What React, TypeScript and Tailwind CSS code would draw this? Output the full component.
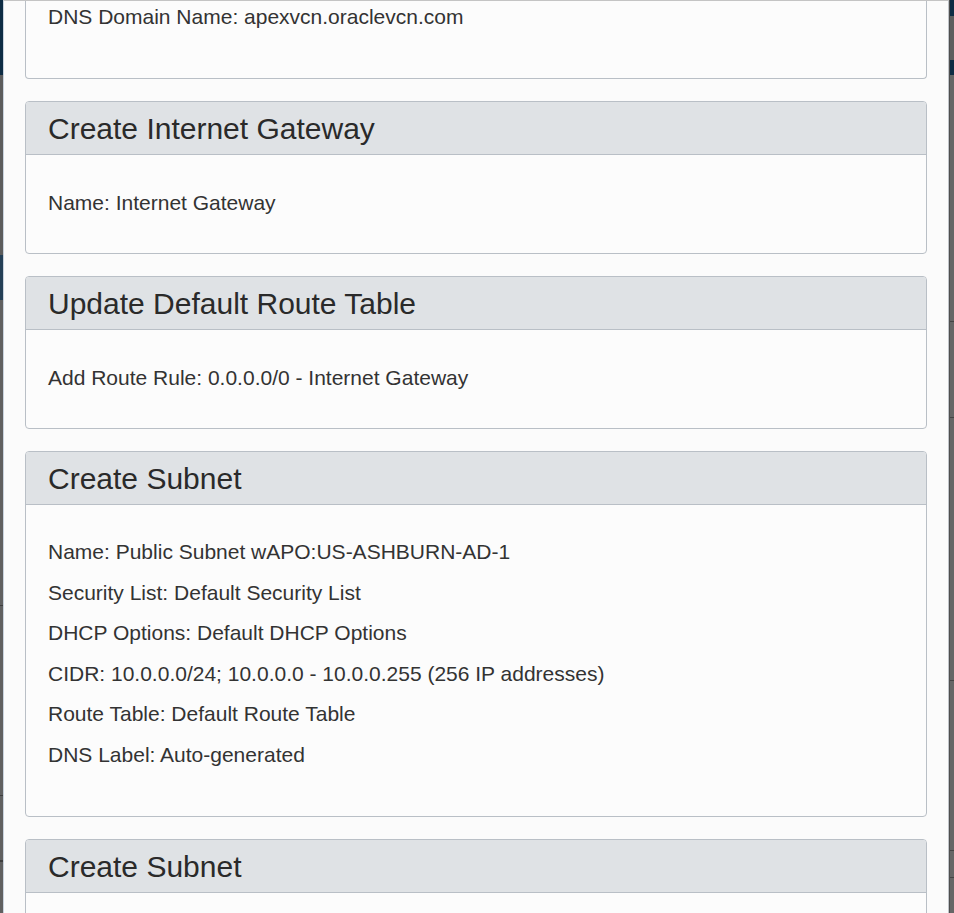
import React from "react";

const font = { fontFamily: '"Liberation Sans", Arial, sans-serif' };

function Panel({
  title,
  lines,
  multi = false,
}: {
  title: string;
  lines: string[];
  multi?: boolean;
}) {
  return (
    <div className="shrink-0 rounded-[4px] border border-[#b9bfc6] bg-[#fcfcfc] overflow-hidden">
      <div className="h-[53px] pt-[2px] flex items-center px-[22px] bg-[#dfe2e5] border-b border-[#b9bfc6]">
        <span className="text-[30px] leading-[34px] text-[#2a2a2a]">{title}</span>
      </div>
      <div
        className={
          "px-[22px] flex flex-col gap-[16.5px] " +
          (multi ? "pt-[35px] pb-[49.5px]" : "pt-[36px] pb-[38px]")
        }
      >
        {lines.map((l) => (
          <div key={l} className="text-[21px] leading-[24px] text-[#333333] whitespace-nowrap">
            {l}
          </div>
        ))}
      </div>
    </div>
  );
}

export default function App() {
  return (
    <div className="w-[954px] h-[913px] overflow-hidden flex bg-[#656565]" style={font}>
      {/* backdrop left strip */}
      <div className="w-[3px] shrink-0 flex flex-col">
        <div className="h-[75px] bg-[#0e2c44]" />
        <div className="h-[180px] bg-[#5c5c5c]" />
        <div className="h-[45px] bg-[#243f56]" />
        <div className="h-[305px] bg-[#606060]" />
        <div className="h-[1px] bg-[#3e3e3e]" />
        <div className="h-[189px] bg-[#606060]" />
        <div className="h-[1px] bg-[#3e3e3e]" />
        <div className="h-[64px] bg-[#606060]" />
        <div className="h-[2px] bg-[#3e3e3e]" />
        <div className="flex-1 bg-[#606060]" />
      </div>

      {/* modal */}
      <div className="w-[946px] shrink-0 h-[913px] bg-[#fbfbfb] border-l border-l-[#c9d3de] border-r border-r-[#bfc3c8] border-t border-t-[#c4c4c4] overflow-hidden">
        <div className="px-[21px] flex flex-col gap-[22px]">
          <div className="shrink-0 rounded-b-[4px] border-x border-b border-[#b9bfc6] bg-[#fcfcfc] px-[22px] pt-[4px] pb-[49px]">
            <div className="text-[21px] leading-[24px] text-[#333333] whitespace-nowrap">
              DNS Domain Name: apexvcn.oraclevcn.com
            </div>
          </div>
          <Panel title="Create Internet Gateway" lines={["Name: Internet Gateway"]} />
          <Panel
            title="Update Default Route Table"
            lines={["Add Route Rule: 0.0.0.0/0 - Internet Gateway"]}
          />
          <Panel
            title="Create Subnet"
            multi
            lines={[
              "Name: Public Subnet wAPO:US-ASHBURN-AD-1",
              "Security List: Default Security List",
              "DHCP Options: Default DHCP Options",
              "CIDR: 10.0.0.0/24; 10.0.0.0 - 10.0.0.255 (256 IP addresses)",
              "Route Table: Default Route Table",
              "DNS Label: Auto-generated",
            ]}
          />
          <Panel title="Create Subnet" multi lines={[]} />
        </div>
      </div>

      {/* divider + backdrop right strip */}
      <div className="w-[1px] shrink-0 bg-[#4e4e4e]" />
      <div className="flex-1 flex flex-col">
        <div className="h-[16px] bg-[#0e2c44]" />
        <div className="h-[44px] bg-[#5e5e5e]" />
        <div className="h-[15px] bg-[#0e2c44]" />
        <div className="h-[246px] bg-[#666666]" />
        <div className="h-[1px] bg-[#444444]" />
        <div className="h-[95px] bg-[#666666]" />
        <div className="h-[1px] bg-[#444444]" />
        <div className="h-[262px] bg-[#666666]" />
        <div className="h-[1px] bg-[#444444]" />
        <div className="h-[169px] bg-[#666666]" />
        <div className="h-[1px] bg-[#444444]" />
        <div className="h-[26px] bg-[#666666]" />
        <div className="h-[1px] bg-[#444444]" />
        <div className="flex-1 bg-[#666666]" />
      </div>
    </div>
  );
}
